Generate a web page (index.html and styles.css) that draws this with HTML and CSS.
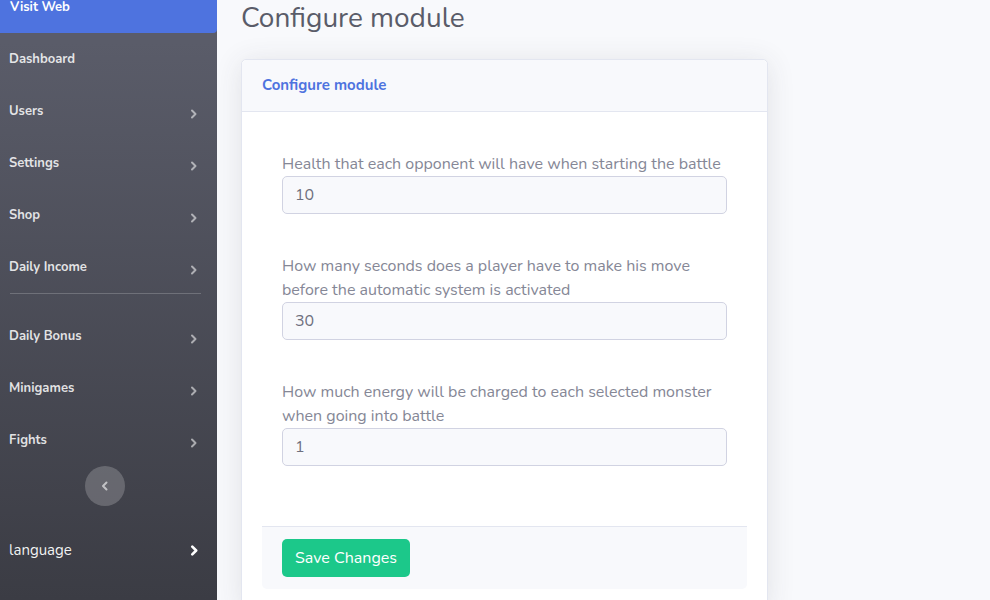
FILE: index.html
```html
<!DOCTYPE html>
<html>
<head>
<meta charset="utf-8">
<link rel="stylesheet" href="styles.css">
</head>
<body>
<div class="layout">
  <aside class="sidebar">
    <a class="nav-brand">Visit Web</a>
    <a class="nav-item"><span>Dashboard</span></a>
    <a class="nav-item"><span>Users</span><svg class="chev" viewBox="0 0 8 10"><polyline points="2,1.5 5.5,5 2,8.5"/></svg></a>
    <a class="nav-item"><span>Settings</span><svg class="chev" viewBox="0 0 8 10"><polyline points="2,1.5 5.5,5 2,8.5"/></svg></a>
    <a class="nav-item"><span>Shop</span><svg class="chev" viewBox="0 0 8 10"><polyline points="2,1.5 5.5,5 2,8.5"/></svg></a>
    <a class="nav-item"><span>Daily Income</span><svg class="chev" viewBox="0 0 8 10"><polyline points="2,1.5 5.5,5 2,8.5"/></svg></a>
    <hr class="divider">
    <a class="nav-item"><span>Daily Bonus</span><svg class="chev" viewBox="0 0 8 10"><polyline points="2,1.5 5.5,5 2,8.5"/></svg></a>
    <a class="nav-item"><span>Minigames</span><svg class="chev" viewBox="0 0 8 10"><polyline points="2,1.5 5.5,5 2,8.5"/></svg></a>
    <a class="nav-item"><span>Fights</span><svg class="chev" viewBox="0 0 8 10"><polyline points="2,1.5 5.5,5 2,8.5"/></svg></a>
    <div class="toggle-row"><button class="toggle"><svg viewBox="0 0 8 10"><polyline points="5.5,1.5 2,5 5.5,8.5"/></svg></button></div>
    <a class="nav-lang"><span>language</span><svg class="chev-lg" viewBox="0 0 8 10"><polyline points="2,1.5 5.5,5 2,8.5"/></svg></a>
  </aside>
  <main class="content">
    <h3 class="page-title">Configure module</h3>
    <div class="card">
      <div class="card-header">Configure module</div>
      <div class="card-body">
        <div class="form-area">
          <div class="form-group">
            <label>Health that each opponent will have when starting the battle</label>
            <input class="form-control" value="10">
          </div>
          <div class="form-group">
            <label>How many seconds does a player have to make his move before the automatic system is activated</label>
            <input class="form-control" value="30">
          </div>
          <div class="form-group">
            <label>How much energy will be charged to each selected monster when going into battle</label>
            <input class="form-control" value="1">
          </div>
        </div>
        <div class="card-footer">
          <button class="btn-save">Save Changes</button>
        </div>
      </div>
    </div>
  </main>
</div>
</body>
</html>
```
FILE: styles.css
```css
* { box-sizing: border-box; }
html, body { margin: 0; padding: 0; height: 600px; overflow: hidden; }
body {
  font-family: "Nunito", Lato, "Open Sans", sans-serif;
  background: #f8f9fc;
  color: #858796;
}
.layout { display: flex; height: 600px; }
.sidebar {
  width: 217px;
  flex: none;
  background: linear-gradient(180deg, #5a5c69 10%, #3b3c44 100%);
  display: flex;
  flex-direction: column;
  margin-top: -20px;
  height: 620px;
}
.nav-brand {
  height: 53px;
  background: #4e73df;
  color: #fff;
  font-weight: 700;
  font-size: 13px;
  display: flex;
  align-items: center;
  padding-left: 10px;
  border-bottom-right-radius: 4px;
}
.nav-item {
  height: 52px;
  display: flex;
  align-items: center;
  justify-content: space-between;
  padding: 0 19px 0 9px;
  color: rgba(255,255,255,.85);
  font-weight: 700;
  font-size: 13px;
}
.chev { width: 8px; height: 10px; margin-top: 5px; }
.chev polyline, .chev-lg polyline, .toggle polyline {
  fill: none;
  stroke: rgba(255,255,255,.55);
  stroke-width: 2;
  stroke-linecap: round;
  stroke-linejoin: round;
}
.divider {
  margin: 0 16px 16px 10px;
  border: 0;
  border-top: 1px solid rgba(255,255,255,.2);
  height: 0;
}
.toggle-row { display: flex; justify-content: center; padding: 0 8px 0 0; }
.toggle {
  width: 40px; height: 40px;
  border-radius: 50%;
  border: 0;
  background: rgba(255,255,255,.2);
  display: flex; align-items: center; justify-content: center;
  padding: 0;
}
.toggle svg { width: 8px; height: 10px; }
.toggle polyline { stroke: rgba(255,255,255,.6); }
.nav-lang {
  height: 88px;
  display: flex;
  align-items: center;
  justify-content: space-between;
  padding: 0 18px 0 9px;
  color: rgba(255,255,255,.95);
  font-size: 15px;
}
.chev-lg { width: 9px; height: 11px; }
.chev-lg polyline { stroke: #fff; stroke-width: 2.4; }
.content { flex: 1; padding: 0 0 0 24px; }
.page-title {
  margin: 0;
  font-weight: 400;
  font-size: 28px;
  line-height: 36px;
  color: #5a5c69;
  padding-top: 0;
}
.card {
  width: 527px;
  margin-top: 23px;
  background: #fff;
  border: 1px solid #e3e6f0;
  border-radius: 5px;
  box-shadow: 0 3px 28px 0 rgba(58,59,69,.12);
}
.card-header {
  height: 52px;
  background: #f8f9fc;
  border-bottom: 1px solid #e3e6f0;
  border-radius: 5px 5px 0 0;
  display: flex;
  align-items: center;
  padding: 0 0 2px 20px;
  color: #4e73df;
  font-weight: 700;
  font-size: 15px;
}
.card-body { padding: 20px 20px 20px 20px; }
.form-area { padding: 20px 20px 60px 20px; }
.form-group { display: flex; flex-direction: column; margin-bottom: 40px; }
.form-group:last-child { margin-bottom: 0; }
.form-group label { font-size: 16px; line-height: 24px; margin-bottom: 0; }
.form-control {
  width: 445px;
  height: 38px;
  border: 1px solid #d1d3e2;
  border-radius: 5px;
  background: #f8f9fc;
  font-family: inherit;
  font-size: 16px;
  color: #6e707e;
  padding: 0 12px;
}
.card-footer {
  background: #f8f9fc;
  border-top: 1px solid #e3e6f0;
  border-radius: 0 0 5px 5px;
  padding: 12px 20px;
}
.btn-save {
  height: 38px;
  padding: 0 13px;
  background: #1cc88a;
  border: 0;
  border-radius: 5px;
  color: #fff;
  font-family: inherit;
  font-size: 16px;
}
```
